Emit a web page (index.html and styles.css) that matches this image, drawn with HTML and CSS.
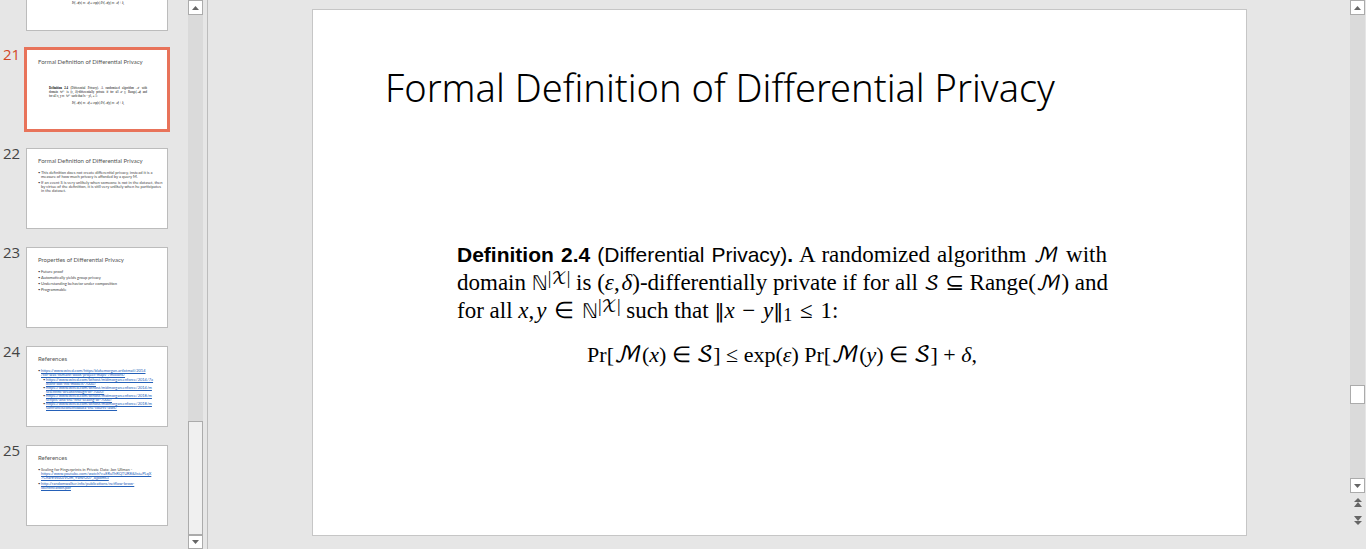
FILE: index.html
```html
<!DOCTYPE html>
<html lang="en">
<head>
<meta charset="utf-8">
<title>Formal Definition of Differential Privacy</title>
<link rel="stylesheet" href="styles.css">
</head>
<body>
<div class="app">
  <nav class="slides" aria-label="Slides">
    <ol class="slide-list">
      <li class="row partial">
        <span class="number"></span>
        <div class="thumb">
          <div class="thumb-def"><p class="formula">Pr[ℳ(x) ∈ 𝒮] ≤ exp(ε) Pr[ℳ(y) ∈ 𝒮] + δ,</p></div>
        </div>
      </li>
      <li class="row selected">
        <span class="number">21</span>
        <div class="thumb">
          <p class="thumb-title">Formal Definition of Differential Privacy</p>
          <div class="thumb-def"><p><b>Definition 2.4</b> (Differential Privacy). A randomized algorithm ℳ with</p><p>domain ℕ<sup>|𝒳|</sup> is (ε, δ)-differentially private if for all 𝒮 ⊆ Range(ℳ) and</p><p class="short">for all x, y ∈ ℕ<sup>|𝒳|</sup> such that ‖x − y‖₁ ≤ 1:</p><p class="formula">Pr[ℳ(x) ∈ 𝒮] ≤ exp(ε) Pr[ℳ(y) ∈ 𝒮] + δ,</p></div>
        </div>
      </li>
      <li class="row">
        <span class="number">22</span>
        <div class="thumb">
          <p class="thumb-title">Formal Definition of Differential Privacy</p>
          <ul class="bullets">
            <li>This definition does not create differential privacy, instead it is a<br>measure of how much privacy is afforded by a query M.</li>
            <li>If an event S is very unlikely when someone is not in the dataset, then<br>by virtue of the definition, it is still very unlikely when he participates<br>in the dataset.</li>
          </ul>
        </div>
      </li>
      <li class="row">
        <span class="number">23</span>
        <div class="thumb">
          <p class="thumb-title">Properties of Differential Privacy</p>
          <ul class="bullets">
            <li>Future proof</li>
            <li>Automatically yields group privacy</li>
            <li>Understanding behavior under composition</li>
            <li>Programmable</li>
          </ul>
        </div>
      </li>
      <li class="row">
        <span class="number">24</span>
        <div class="thumb">
          <p class="thumb-title">References</p>
          <ul class="bullets">
            <li><a href="#">https://www.wired.com/https/blakemorgan.artlxtmail/2014<br>/tor-was-nsmann-book-project-maps-7millions/</a>
              <ul class="sub">
                <li><a href="#">https://www.wired.com/bthost/midmorgan.enforce/2014/7a<br>didnt-dot-nts-models-7000/</a></li>
                <li><a href="#">https://www.wired.com/bthost/midmorgan.enforce/2014/m<br>scientific-breakthrough-of-7000/</a></li>
                <li><a href="#">https://www.wired.com/bthost/midmorgan.enforce/2018/m<br>scripts-and-the-first-scaling-of-7000/</a></li>
                <li><a href="#">https://www.wired.com/bthost/midmorgan.enforce/2018/m<br>sanfrancisconetflixdata-the-courts-laws/</a></li>
              </ul>
            </li>
          </ul>
        </div>
      </li>
      <li class="row">
        <span class="number">25</span>
        <div class="thumb">
          <p class="thumb-title">References</p>
          <ul class="bullets">
            <li>Scaling for Fingerprints in Private Data: Jon Ullman -<br><a href="#">https://www.youtube.com/watch?v=ERuThRQTUR8&amp;list=PLqX<br>7CharEWu0JVOm_9anVO07_4jpdms3</a></li>
            <li><a href="#">http://randomwalker.info/publications/netflow-brow-<br>identification.pdf</a></li>
          </ul>
        </div>
      </li>
    </ol>
    <div class="scrollbar list-scrollbar">
      <button class="scroll-button" aria-label="Scroll up"><svg width="7" height="4" viewBox="0 0 7 4"><path d="M0 4L3.5 0L7 4Z"/></svg></button>
      <div class="track list-track"><div class="handle"></div></div>
      <button class="scroll-button" aria-label="Scroll down"><svg width="7" height="4" viewBox="0 0 7 4"><path d="M0 0L3.5 4L7 0Z"/></svg></button>
    </div>
  </nav>
  <main class="stage">
    <article class="slide">
      <h1 class="title">Formal Definition of Differential Privacy</h1>
      <section class="definition">
        <p class="line"><span class="sans"><b>Definition 2.4</b> (Differential Privacy)<b>.</b></span> A randomized algorithm <span class="cal">ℳ</span> with</p>
        <p class="line">domain <span class="bb">ℕ</span><sup>|<span class="cal">𝒳</span>|</sup> is (<i>ε</i>,&#8202;<i>δ</i>)-differentially private if for all <span class="cal">𝒮</span> ⊆ Range(<span class="cal">ℳ</span>) and</p>
        <p class="line last">for all <i>x</i>,<i>&#8202;y</i> <span class="rel">∈</span> <span class="bb">ℕ</span><sup>|<span class="cal">𝒳</span>|</sup> such that <span class="norm">‖</span><i>x</i> <span class="rel">−</span> <i>y</i><span class="norm">‖</span><sub>1</sub> <span class="rel">≤</span> 1:</p>
        <p class="equation">Pr[<span class="cal">ℳ</span>(<i>x</i>) ∈ <span class="cal">𝒮</span>] ≤ exp(<i>ε</i>) Pr[<span class="cal">ℳ</span>(<i>y</i>) ∈ <span class="cal">𝒮</span>] + <i>δ</i>,</p>
      </section>
    </article>
  </main>
  <div class="scrollbar main-scrollbar">
    <button class="scroll-button" aria-label="Scroll up"><svg width="7" height="4" viewBox="0 0 7 4"><path d="M0 4L3.5 0L7 4Z"/></svg></button>
    <div class="track main-track"><div class="handle"></div></div>
    <button class="scroll-button" aria-label="Scroll down"><svg width="7" height="4" viewBox="0 0 7 4"><path d="M0 0L3.5 4L7 0Z"/></svg></button>
    <button class="jump" aria-label="Previous slide"><svg width="8" height="9" viewBox="0 0 8 9"><path d="M0 4L4 0L8 4ZM0 9L4 4L8 9Z"/></svg></button>
    <button class="jump" aria-label="Next slide"><svg width="8" height="9" viewBox="0 0 8 9"><path d="M0 0L4 5L8 0ZM0 5L4 9L8 5Z"/></svg></button>
  </div>
</div>
</body>
</html>
```
FILE: styles.css
```css
* { box-sizing: border-box; }
body { margin: 0; background: #e6e6e6; font-family: "Open Sans", sans-serif; color: #000; }
p, h1, ol, ul { margin: 0; padding: 0; list-style: none; }
button { padding: 0; border: 0; background: none; }

.app { display: flex; height: 100vh; overflow: hidden; }

.slides { display: flex; flex: none; width: 208px; border-right: 1px solid #bcbcbc; overflow: hidden; }
.slide-list { flex: 1; display: flex; flex-direction: column; gap: 18px; padding-left: 3px; }
.row { display: flex; gap: 5px; }
.number { width: 18px; font-size: 15px; line-height: 10px; color: #444; }
.selected .number { color: #d24726; }
.thumb { width: 142px; height: 81px; border: 1px solid #bcbcbc; background: #fff; padding: 8px 0 0 11px; font-family: Lato, sans-serif; }
.selected .thumb { border-color: #e8735a; box-shadow: 0 0 0 2px #e8735a; }
.partial .thumb { height: 31px; border-top: 0; padding-top: 1px; }
.partial .thumb-def { margin-top: 0; }
.partial .thumb-def .formula { margin-top: 0; }
.thumb-title { font-size: 6px; line-height: 8px; color: #555; white-space: nowrap; }
.thumb-def { width: 98px; margin: 20px 0 0 11px; font: 3px/4px "Liberation Serif", serif; color: #000; white-space: nowrap; }
.thumb-def p { text-align-last: justify; }
.thumb-def .short { text-align-last: left; }
.thumb-def .formula { text-align-last: center; margin-top: 3px; }
.thumb-def sup { font-size: 2px; line-height: 0; vertical-align: 1px; }

.bullets { display: flex; flex-direction: column; gap: 2px; margin-top: 6px; padding-left: 3px; font-size: 4px; line-height: 4px; color: #444; white-space: nowrap; }
.bullets li::before { content: "•"; float: left; margin-left: -3px; }
.bullets a { color: #2460b8; }
.sub { display: flex; flex-direction: column; padding-left: 5px; margin-top: 1px; }

.scrollbar { display: flex; flex-direction: column; flex: none; width: 15px; margin-right: 4px; }
.scroll-button { display: flex; align-items: center; justify-content: center; flex: none; height: 15px; border: 1px solid #ababab; background: #fff; }
.scroll-button svg, .jump svg { fill: #666; }
.list-scrollbar .scroll-button:last-child { height: 14px; }
.track { flex: 1; display: flex; flex-direction: column; background: #dadada; }
.handle { border: 1px solid #ababab; background: #fff; }
.list-track { justify-content: flex-end; }
.list-track .handle { height: 22%; background: #f0f0f0; }
.main-scrollbar { margin-right: 1px; padding-bottom: 20px; }
.main-track { padding-top: 370px; }
.main-track .handle { height: 19px; }
.jump { display: flex; align-items: center; justify-content: center; height: 18px; }

.stage { flex: 1; min-width: 0; display: flex; padding: 9px 103px 13px 104px; }
.slide { flex: 1; min-width: 0; border: 1px solid #c6c6c6; background: #fff; padding: 51px 72px 0; }
.title { font-family: "Noto Sans", "Open Sans", sans-serif; font-size: 38px; font-weight: 300; line-height: 52px; white-space: nowrap; }
.definition { margin: 128px 67px 0 72px; font: 23px/28px "Liberation Serif", serif; white-space: nowrap; }
.line { text-align-last: justify; }
.line.last { text-align-last: left; }
.sans { font-family: "Liberation Sans", sans-serif; font-size: 21px; line-height: 20px; }
.cal { font-family: "DejaVu Math TeX Gyre", "DejaVu Serif", serif; font-size: 20px; line-height: 0; }
.bb, .norm { font-family: "DejaVu Sans", sans-serif; font-size: 20px; line-height: 0; }
.rel { margin: 0 2px; }
sup, sub { font-size: 18px; line-height: 0; }
sup { vertical-align: 6px; }
sub { vertical-align: -3px; }
sup .cal { font-size: 16px; }
.equation { margin-top: 16px; font-size: 22px; text-align: center; }
.equation .cal { font-size: 22px; }
```
